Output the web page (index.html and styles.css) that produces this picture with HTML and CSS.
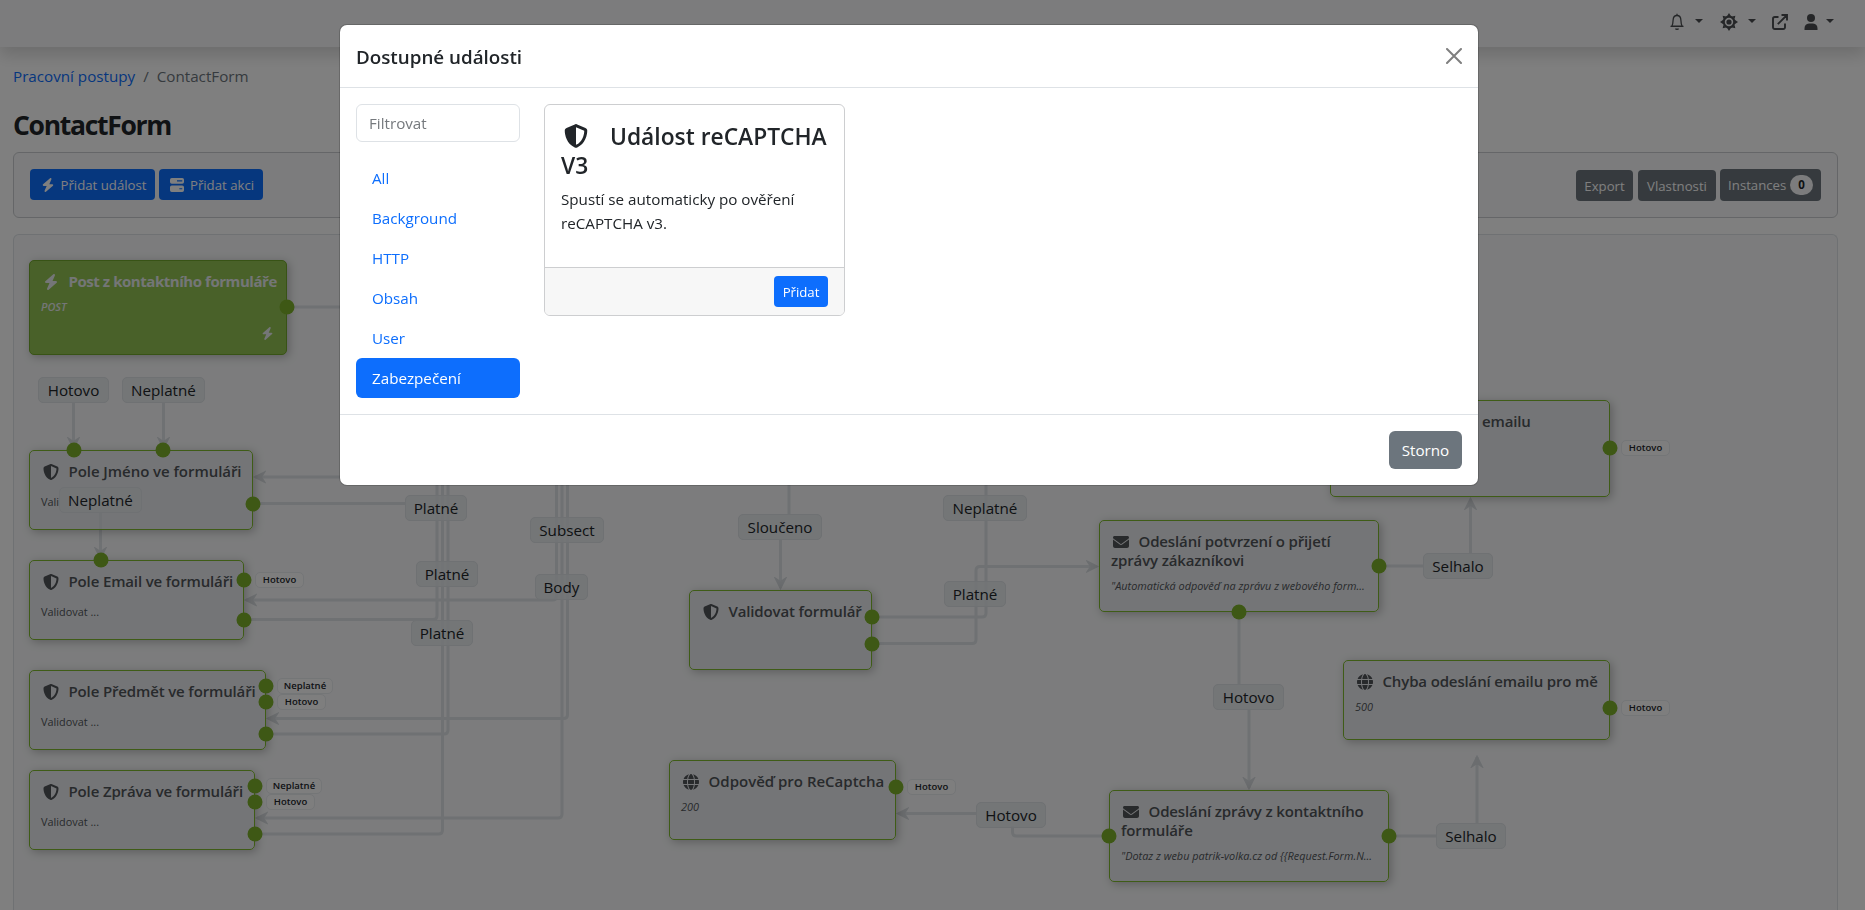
FILE: index.html
```html
<!DOCTYPE html>
<html lang="cs">
<head>
    <meta charset="UTF-8">
    <meta name="viewport" content="width=device-width, initial-scale=1.0">
    <title>ContactForm</title>
    <link rel="stylesheet" href="styles.css">
</head>
<body>
    <!-- Sdílené ikony -->
    <svg class="sprite" width="0" height="0">
        <symbol id="bolt" viewBox="0 0 448 512"><path d="M349.400 44.600c5.900-13.700 1.500-29.700-10.600-38.500s-28.600-8-39.900 1.800l-256 224c-10 8.800-13.600 22.900-8.900 35.300S50.700 288 64 288H175.500L98.600 467.400c-5.900 13.700-1.500 29.700 10.600 38.500s28.600 8 39.900-1.800l256-224c10-8.800 13.600-22.900 8.900-35.300s-16.600-20.700-30-20.700H272.500L349.400 44.600z"/></symbol>
        <symbol id="shield" viewBox="0 0 512 512"><path d="M256 0c4.600 0 9.200 1 13.400 2.900L457.700 82.800c22 9.300 38.400 31 38.300 57.200c-.5 99.200-41.300 280.700-213.600 363.200c-16.700 8-36.100 8-52.800 0C57.300 420.700 16.500 239.200 16 140c-.1-26.200 16.300-47.900 38.300-57.200L242.700 2.900C246.800 1 251.400 0 256 0zm0 66.800V444.800C394 378 431.100 230.100 432 141.400L256 66.800z"/></symbol>
        <symbol id="mail" viewBox="0 0 512 512"><path d="M48 64C21.500 64 0 85.500 0 112c0 15.100 7.100 29.300 19.200 38.400L236.800 313.600c11.400 8.500 27 8.500 38.400 0L492.800 150.400c12.100-9.100 19.200-23.300 19.200-38.400c0-26.500-21.500-48-48-48H48zM0 176V384c0 35.300 28.700 64 64 64H448c35.300 0 64-28.700 64-64V176L294.400 339.200c-22.800 17.100-54 17.100-76.800 0L0 176z"/></symbol>
        <symbol id="globe" viewBox="0 0 512 512"><path d="M352 256c0 22.200-1.200 43.600-3.300 64H163.300c-2.200-20.400-3.300-41.800-3.300-64s1.200-43.600 3.300-64H348.700c2.200 20.400 3.300 41.800 3.300 64zm28.800-64H503.900c5.300 20.500 8.100 41.900 8.100 64s-2.800 43.500-8.100 64H380.800c2.100-20.600 3.200-42 3.200-64s-1.100-43.400-3.200-64zm112.600-32H376.700c-10-63.900-29.800-117.400-55.300-151.600c78.300 20.700 142 77.500 171.900 151.600zm-149.100 0H167.700c6.100-36.400 15.500-68.600 27-94.700c10.500-23.600 22.200-40.700 33.500-51.500C239.400 3.200 248.700 0 256 0s16.600 3.200 27.800 13.800c11.300 10.800 23 27.900 33.500 51.500c11.600 26 20.900 58.200 27 94.700zm-209 0H18.600C48.600 85.900 112.200 29.100 190.600 8.400C165.100 42.600 145.300 96.100 135.300 160zM8.100 192H131.200c-2.100 20.600-3.200 42-3.200 64s1.100 43.400 3.200 64H8.100C2.800 299.500 0 278.100 0 256s2.800-43.500 8.100-64zM194.700 446.600c-11.600-26-20.900-58.200-27-94.600H344.300c-6.100 36.400-15.500 68.600-27 94.600c-10.500 23.600-22.200 40.700-33.500 51.500C272.600 508.800 263.300 512 256 512s-16.600-3.200-27.800-13.800c-11.300-10.800-23-27.900-33.500-51.500zM135.300 352c10 63.900 29.800 117.400 55.300 151.600C112.200 482.900 48.600 426.100 18.600 352H135.300zm358.100 0c-30 74.100-93.600 130.900-171.900 151.600c25.500-34.200 45.200-87.700 55.300-151.600H493.400z"/></symbol>
        <symbol id="server" viewBox="0 0 12 12"><path fill-rule="evenodd" d="M1.500 0h9A1.500 1.500 0 0 1 12 1.500v2A1.500 1.500 0 0 1 10.500 5h-9A1.500 1.500 0 0 1 0 3.500v-2A1.500 1.500 0 0 1 1.500 0zM6 2v1h4.500V2zM1.500 6.500h9A1.500 1.500 0 0 1 12 8v2.500a1.500 1.500 0 0 1-1.500 1.500h-9A1.500 1.500 0 0 1 0 10.500V8a1.500 1.500 0 0 1 1.500-1.500zM8 8.700v1h2.500v-1z"/></symbol>
    </svg>

    <!-- Horní lišta -->
    <header class="top-menu">
        <svg class="bell" viewBox="0 0 16 18"><path d="M8 1.800v-1M2.800 13.200c1-1.500 1.200-3.500 1.300-6C4.200 4.300 5.800 2.500 8 2.500s3.800 1.800 3.900 4.700c.1 2.500.3 4.500 1.300 6zM1.500 13.400h13" fill="none" stroke="currentColor" stroke-width="1.300"/><path d="M6 15.500h4a2 1.500 0 0 1-4 0z"/></svg>
        <span class="caret caret-bell"></span>
        <svg class="gear" viewBox="-9 -9 18 18"><circle r="5.300" fill="none" stroke="currentColor" stroke-width="2.200"/><circle r="2.600"/><g id="teeth"><path d="M-1.900-6 0-9 1.900-6zM-1.900 6 0 9 1.900 6zM-6-1.900-9 0-6 1.900zM6-1.900 9 0 6 1.900z"/></g><use href="#teeth" transform="rotate(45)"/></svg>
        <span class="caret caret-gear"></span>
        <svg class="external" viewBox="0 0 16 16"><path d="M6.500 3H2.800A1.800 1.800 0 0 0 1 4.800v8.400A1.800 1.800 0 0 0 2.800 15h8.400a1.800 1.800 0 0 0 1.800-1.800V9.500M5.800 10.200 14.500 1.500M9.500 1H15v5.500" fill="none" stroke="currentColor" stroke-width="1.900"/></svg>
        <svg class="person" viewBox="0 0 14 16"><circle cx="7" cy="4" r="4"/><path d="M.5 16v-1.500A5 5 0 0 1 5 9.500h4a5 5 0 0 1 4.500 5V16z"/></svg>
        <span class="caret caret-person"></span>
    </header>

    <main class="page">
        <nav class="breadcrumb">
            <a href="#">Pracovní postupy</a><span class="slash">/</span><span>ContactForm</span>
        </nav>
        <h1>ContactForm</h1>

        <div class="toolbar">
            <div class="toolbar-left">
                <a href="#" class="btn btn-sm btn-primary btn-event"><svg><use href="#bolt"/></svg>Přidat událost</a>
                <a href="#" class="btn btn-sm btn-primary btn-action"><svg><use href="#server"/></svg>Přidat akci</a>
            </div>
            <div class="toolbar-right">
                <a href="#" class="btn btn-sm btn-secondary btn-export">Export</a>
                <a href="#" class="btn btn-sm btn-secondary btn-properties">Vlastnosti</a>
                <a href="#" class="btn btn-sm btn-secondary btn-instances">Instances <span class="badge">0</span></a>
            </div>
        </div>

        <!-- Plátno pracovního postupu -->
        <div class="canvas">
            <svg class="lines" viewBox="14 235 1823 675">
                <defs>
                    <marker id="arrow" markerUnits="userSpaceOnUse" markerWidth="16" markerHeight="16" refX="11" refY="8" orient="auto"><path d="M2 3.500 11 8 2 12.500 5 8z"/></marker>
                </defs>
                <path d="M287 307H345"/>
                <path d="M73.500 403V448" marker-end="url(#arrow)"/>
                <path d="M163.500 403V448" marker-end="url(#arrow)"/>
                <path d="M100.500 513V558" marker-end="url(#arrow)"/>
                <path d="M345 477H255" marker-end="url(#arrow)"/>
                <path d="M253 503.500H405"/>
                <path d="M437 480V615.500Q437 619.500 433 619.500H244"/>
                <path d="M442.500 480V830Q442.500 834 438.500 834H255"/>
                <path d="M448 480V730Q448 734 444 734H266"/>
                <path d="M556.500 480V596Q556.500 600 552.500 600H246" marker-end="url(#arrow)"/>
                <path d="M562 480V814Q562 818 558 818H257" marker-end="url(#arrow)"/>
                <path d="M567.500 480V714.500Q567.500 718.500 563.500 718.500H268" marker-end="url(#arrow)"/>
                <path d="M789 480V514"/>
                <path d="M780.500 540V588" marker-end="url(#arrow)"/>
                <path d="M872 617H982Q986 617 986 613V480"/>
                <path d="M872 643.500H972Q976 643.500 976 639.500V570.500Q976 566.500 980 566.500H1097" marker-end="url(#arrow)"/>
                <path d="M1109 836H1016.500Q1012.500 836 1012.500 832V826"/>
                <path d="M976 813.500H898" marker-end="url(#arrow)"/>
                <path d="M1379 566H1423"/>
                <path d="M1470.500 553V499" marker-end="url(#arrow)"/>
                <path d="M1239 612V684"/>
                <path d="M1249 710V788" marker-end="url(#arrow)"/>
                <path d="M1389 836H1436"/>
                <path d="M1477 823V757" marker-end="url(#arrow)"/>
            </svg>

            <div class="node start n-post">
                <h6><svg><use href="#bolt"/></svg>Post z kontaktního formuláře</h6>
                <em>POST</em>
                <svg class="corner"><use href="#bolt"/></svg>
            </div>
            <div class="node n-name">
                <h6><svg><use href="#shield"/></svg>Pole Jméno ve formuláři</h6>
                <p>Vali</p>
            </div>
            <div class="node n-email">
                <h6><svg><use href="#shield"/></svg>Pole Email ve formuláři</h6>
                <p>Validovat ...</p>
            </div>
            <div class="node n-subject">
                <h6><svg><use href="#shield"/></svg>Pole Předmět ve formuláři</h6>
                <p>Validovat ...</p>
            </div>
            <div class="node n-message">
                <h6><svg><use href="#shield"/></svg>Pole Zpráva ve formuláři</h6>
                <p>Validovat ...</p>
            </div>
            <div class="node n-validate">
                <h6><svg><use href="#shield"/></svg>Validovat formulář</h6>
            </div>
            <div class="node n-captcha">
                <h6><svg><use href="#globe"/></svg>Odpověď pro ReCaptcha</h6>
                <em>200</em>
            </div>
            <div class="node n-confirm">
                <h6><svg><use href="#mail"/></svg>Odeslání potvrzení o přijetí<br>zprávy zákazníkovi</h6>
                <em class="subject">"Automatická odpověď na zprávu z webového form...</em>
            </div>
            <div class="node n-send">
                <h6><svg><use href="#mail"/></svg>Odeslání zprávy z kontaktního<br>formuláře</h6>
                <em class="subject">"Dotaz z webu patrik-volka.cz od {{Request.Form.N...</em>
            </div>
            <div class="node n-failed">
                <h6><svg><use href="#globe"/></svg>Chyba odeslání emailu pro mě</h6>
                <em>500</em>
            </div>
            <div class="node n-failed-client">
                <h6>emailu</h6>
            </div>

            <svg class="dots" viewBox="14 235 1823 675">
                <circle cx="287" cy="307" r="7.500"/>
                <circle cx="74" cy="450" r="7.500"/>
                <circle cx="163" cy="450" r="7.500"/>
                <circle cx="253" cy="504" r="7.500"/>
                <circle cx="101" cy="560" r="7.500"/>
                <circle cx="244" cy="580" r="7.500"/>
                <circle cx="244" cy="620" r="7.500"/>
                <circle cx="266" cy="686" r="7.500"/>
                <circle cx="266" cy="702" r="7.500"/>
                <circle cx="266" cy="734" r="7.500"/>
                <circle cx="255" cy="786" r="7.500"/>
                <circle cx="255" cy="802" r="7.500"/>
                <circle cx="255" cy="834" r="7.500"/>
                <circle cx="872" cy="617" r="7.500"/>
                <circle cx="872" cy="644" r="7.500"/>
                <circle cx="896" cy="787" r="7.500"/>
                <circle cx="1379" cy="566" r="7.500"/>
                <circle cx="1239" cy="612" r="7.500"/>
                <circle cx="1109" cy="836" r="7.500"/>
                <circle cx="1389" cy="836" r="7.500"/>
                <circle cx="1610" cy="708" r="7.500"/>
                <circle cx="1610" cy="448" r="7.500"/>
            </svg>

            <span class="label l1">Hotovo</span>
            <span class="label l2">Neplatné</span>
            <span class="label l3">Neplatné</span>
            <span class="label l4">Platné</span>
            <span class="label l5">Platné</span>
            <span class="label l6">Platné</span>
            <span class="label l7">Subsect</span>
            <span class="label l8">Body</span>
            <span class="label l9">Sloučeno</span>
            <span class="label l10">Neplatné</span>
            <span class="label l11">Platné</span>
            <span class="label l12">Hotovo</span>
            <span class="label l13">Selhalo</span>
            <span class="label l14">Hotovo</span>
            <span class="label l15">Selhalo</span>

            <span class="port p1">Hotovo</span>
            <span class="port wide p2">Neplatné</span>
            <span class="port p3">Hotovo</span>
            <span class="port wide p4">Neplatné</span>
            <span class="port p5">Hotovo</span>
            <span class="port p6">Hotovo</span>
            <span class="port p7">Hotovo</span>
            <span class="port p8">Hotovo</span>
        </div>
    </main>

    <!-- Modal s výběrem události -->
    <div class="modal">
        <div class="modal-content">
            <div class="modal-header">
                <h5>Dostupné události</h5>
                <svg class="close" viewBox="0 0 16 16"><path d="M1 1l14 14M15 1L1 15" stroke="currentColor" stroke-width="2" stroke-linecap="round"/></svg>
            </div>
            <div class="modal-body">
                <div class="filter">
                    <input type="text" placeholder="Filtrovat">
                    <ul>
                        <li><a href="#">All</a></li>
                        <li><a href="#">Background</a></li>
                        <li><a href="#">HTTP</a></li>
                        <li><a href="#">Obsah</a></li>
                        <li><a href="#">User</a></li>
                        <li><a href="#" class="active">Zabezpečení</a></li>
                    </ul>
                </div>
                <div class="card">
                    <div class="card-body">
                        <h4><svg><use href="#shield"/></svg>Událost reCAPTCHA V3</h4>
                        <p>Spustí se automaticky po ověření reCAPTCHA v3.</p>
                    </div>
                    <div class="card-footer">
                        <a href="#" class="btn btn-sm btn-primary btn-add">Přidat</a>
                    </div>
                </div>
            </div>
            <div class="modal-footer">
                <a href="#" class="btn btn-secondary btn-cancel">Storno</a>
            </div>
        </div>
    </div>
</body>
</html>
```
FILE: styles.css
```css
* {
    box-sizing: border-box;
}

body {
    margin: 0;
    height: 910px;
    overflow: hidden;
    background-color: #fff;
    font-family: "Open Sans", "Noto Sans", sans-serif;
    font-size: 15.200px;
    line-height: 24px;
    color: #212529;
}

h1, h4, h5, h6, p, ul {
    margin: 0;
    padding: 0;
}

a {
    color: #0d6efd;
    text-decoration: none;
}

svg {
    fill: currentColor;
}

.sprite {
    position: absolute;
}

/* Horní lišta */
.top-menu {
    position: relative;
    display: flex;
    align-items: center;
    justify-content: flex-end;
    height: 47px;
    padding: 0 31px 3px 0;
    background-color: #f8f9fa;
    box-shadow: 0 8px 16px rgba(0, 0, 0, 0.15);
    color: #4a4d50;
}

.bell {
    width: 16px;
    height: 18px;
}

.gear {
    width: 18px;
    height: 18px;
    margin-left: 17px;
}

.external {
    width: 16px;
    height: 16px;
    margin-left: 16px;
}

.person {
    width: 14px;
    height: 16px;
    margin-left: 16px;
}

.caret {
    border: 4px solid transparent;
    border-top-color: currentColor;
    border-bottom: 0;
    margin: -2px 0 0 8px;
}

.caret-bell,
.caret-gear {
    margin-left: 10px;
}

/* Obsah stránky */
.page {
    height: 863px;
    padding: 17px 27px 0 13px;
    overflow: hidden;
}

.breadcrumb {
    color: #6c757d;
}

.breadcrumb .slash {
    margin: 0 8px;
}

h1 {
    margin: 21px 0 11px;
    font-size: 26.500px;
    line-height: 32px;
    font-weight: 700;
    letter-spacing: -1.300px;
}

.toolbar {
    display: flex;
    justify-content: space-between;
    height: 66px;
    padding: 16px;
    margin-bottom: 16px;
    background-color: #f8f9fa;
    border: 1px solid #cbcdd0;
    border-radius: 6px;
}

.toolbar-left {
    display: flex;
    gap: 4px;
}

.toolbar-right {
    display: flex;
    align-items: flex-end;
    gap: 4px;
}

.btn {
    display: inline-flex;
    align-items: center;
    justify-content: center;
    height: 38px;
    border-radius: 6px;
    color: #fff;
    white-space: nowrap;
}

.btn-sm {
    height: 31px;
    border-radius: 4px;
    font-size: 13.200px;
}

.btn-primary {
    background-color: #0d6efd;
}

.btn-secondary {
    background-color: #6c757d;
}

.toolbar-left .btn {
    padding-left: 2px;
}

.toolbar-left svg {
    width: 14px;
    height: 14px;
    margin-right: 6px;
}

.btn-event {
    width: 125px;
}

.btn-action {
    width: 104px;
}

.btn-export {
    width: 57px;
    margin-right: 1px;
}

.btn-properties {
    width: 78px;
}

.btn-instances {
    width: 101px;
    height: 32px;
}

.badge {
    margin-left: 4px;
    padding: 0 8px;
    border-radius: 10px;
    background-color: #f8f9fa;
    color: #212529;
    font-size: 11.500px;
    font-weight: 700;
    line-height: 20px;
}

/* Plátno a uzly */
.canvas {
    position: relative;
    height: 677px;
    background-color: #f8f9fa;
    border: 1px solid #dee2e6;
    border-bottom: 0;
    border-radius: 6px 6px 0 0;
}

.lines,
.dots {
    position: absolute;
    top: 0;
    left: 0;
    width: 1823px;
    height: 675px;
}

.lines > path {
    fill: none;
    stroke: #dee2e6;
    stroke-width: 3;
}

.lines marker path {
    fill: #d6dade;
    stroke: #d6dade;
    stroke-width: 2;
}

.dots {
    fill: #7cb02a;
}

.node {
    position: absolute;
    height: 80px;
    padding: 11px;
    background-color: rgba(227, 230, 234, 0.7);
    border: 1px solid #7fb92f;
    border-radius: 5px;
    box-shadow: 2px 2px 10px rgba(0, 0, 0, 0.25);
    color: #505458;
    white-space: nowrap;
}

.node h6 {
    font-size: 15px;
    font-weight: 600;
    line-height: 19px;
    letter-spacing: -0.140px;
}

.node h6 svg {
    width: 16px;
    height: 16px;
    margin: 0 9.500px 0 2px;
    vertical-align: -3px;
}

.node em,
.node p {
    display: block;
    font-size: 10.900px;
    line-height: 16px;
}

.node em {
    margin-top: 8px;
}

.node p {
    margin-top: 13px;
}

.node .subject {
    margin-top: 8px;
}

.start {
    background-color: #92c252;
    border-color: #71a72c;
    color: #e9ecef;
}

.node.start h6 {
    font-weight: 700;
    letter-spacing: -0.450px;
}

.start em {
    font-weight: 600;
}

.start .corner {
    position: absolute;
    right: 12px;
    bottom: 14px;
    width: 13px;
    height: 13px;
}

.n-post { left: 15px; top: 25px; width: 258px; height: 95px; }
.n-name { left: 15px; top: 215px; width: 224px; }
.n-name h6 { letter-spacing: -0.050px; }
.n-email { left: 15px; top: 325px; width: 215px; }
.n-subject { left: 15px; top: 435px; width: 237px; }
.n-message { left: 15px; top: 535px; width: 226px; }
.n-validate { left: 675px; top: 355px; width: 183px; }
.n-captcha { left: 655px; top: 525px; width: 227px; }
.n-captcha h6 { letter-spacing: 0; }
.n-confirm { left: 1085px; top: 285px; width: 280px; height: 92px; }
.n-send { left: 1095px; top: 555px; width: 280px; height: 92px; }
.n-failed { left: 1329px; top: 425px; width: 267px; }
.n-failed-client { left: 1316px; top: 165px; width: 280px; height: 97px; padding-left: 151px; }

/* Popisky spojnic */
.label {
    position: absolute;
    width: 62px;
    height: 26px;
    line-height: 24px;
    text-align: center;
    background-color: rgba(230, 234, 236, 0.9);
    border: 1px solid #dee2e6;
    border-radius: 5px;
    color: #212529;
}

.l1 { left: 24px; top: 142px; width: 71px; }
.l2 { left: 108px; top: 142px; width: 83px; }
.l3 { left: 45px; top: 252px; width: 83px; }
.l4 { left: 391px; top: 260px; }
.l5 { left: 402px; top: 326px; }
.l6 { left: 397px; top: 385px; }
.l7 { left: 516px; top: 282px; width: 74px; }
.l8 { left: 521px; top: 339px; width: 53px; }
.l9 { left: 724px; top: 279px; width: 84px; }
.l10 { left: 929px; top: 260px; width: 84px; }
.l11 { left: 930px; top: 346px; }
.l12 { left: 962px; top: 567px; width: 70px; }
.l13 { left: 1409px; top: 318px; width: 70px; }
.l14 { left: 1199px; top: 449px; width: 71px; }
.l15 { left: 1422px; top: 588px; width: 70px; }

.port {
    position: absolute;
    width: 49px;
    height: 16px;
    line-height: 14px;
    text-align: center;
    font-size: 9.500px;
    font-weight: 600;
    background-color: #fcfcfd;
    border: 1px solid #e9ecef;
    border-radius: 5px;
}

.wide {
    width: 56px;
}

.p1 { left: 241px; top: 337px; }
.p2 { left: 263px; top: 443px; }
.p3 { left: 263px; top: 459px; }
.p4 { left: 252px; top: 543px; }
.p5 { left: 252px; top: 559px; }
.p6 { left: 893px; top: 544px; }
.p7 { left: 1607px; top: 205px; }
.p8 { left: 1607px; top: 465px; }

/* Modal */
.modal {
    position: fixed;
    top: 0;
    left: 0;
    z-index: 1000;
    width: 100%;
    height: 100%;
    padding: 25px 0 0 340px;
    background-color: rgba(0, 0, 0, 0.5);
}

.modal-content {
    width: 1138px;
    background-color: #fff;
    border-radius: 7px;
    box-shadow: 0 0 0 1px rgba(0, 0, 0, 0.175);
}

.modal-header {
    display: flex;
    align-items: center;
    justify-content: space-between;
    height: 63px;
    padding: 0 16px;
    border-bottom: 1px solid #dee2e6;
}

.modal-header h5 {
    padding-top: 1px;
    font-size: 18.800px;
    font-weight: 600;
    line-height: 30px;
}

.modal-header .close {
    width: 16px;
    height: 16px;
    color: #7f7f7f;
}

.modal-body {
    display: flex;
    align-items: flex-start;
    gap: 24px;
    height: 326px;
    padding: 16px;
}

.filter {
    width: 164px;
}

.filter input {
    display: block;
    width: 100%;
    height: 38px;
    padding: 6px 12px;
    border: 1px solid #dee2e6;
    border-radius: 6px;
    font: inherit;
}

.filter input::placeholder {
    color: #75797d;
}

.filter ul {
    margin-top: 16px;
    list-style-type: none;
}

.filter li a {
    display: block;
    height: 40px;
    padding: 8px 16px;
    border-radius: 6px;
}

.filter li a.active {
    background-color: #0d6efd;
    color: #fff;
}

.card {
    width: 301px;
    border: 1px solid #cdced0;
    border-radius: 6px;
    overflow: hidden;
}

.card-body {
    height: 162px;
    padding: 17px 16px;
}

.card h4 {
    margin-bottom: 7px;
    font-size: 22.800px;
    font-weight: 600;
    line-height: 29px;
}

.card h4 svg {
    width: 24px;
    height: 24px;
    margin: 0 22px 0 3px;
    vertical-align: -3px;
}

.card-footer {
    display: flex;
    justify-content: flex-end;
    height: 48px;
    padding: 8px 16px;
    background-color: #f7f7f7;
    border-top: 1px solid #cdced0;
}

.btn-add {
    width: 54px;
}

.modal-footer {
    display: flex;
    justify-content: flex-end;
    height: 71px;
    padding: 16px;
    border-top: 1px solid #dee2e6;
}

.btn-cancel {
    width: 73px;
}
```
